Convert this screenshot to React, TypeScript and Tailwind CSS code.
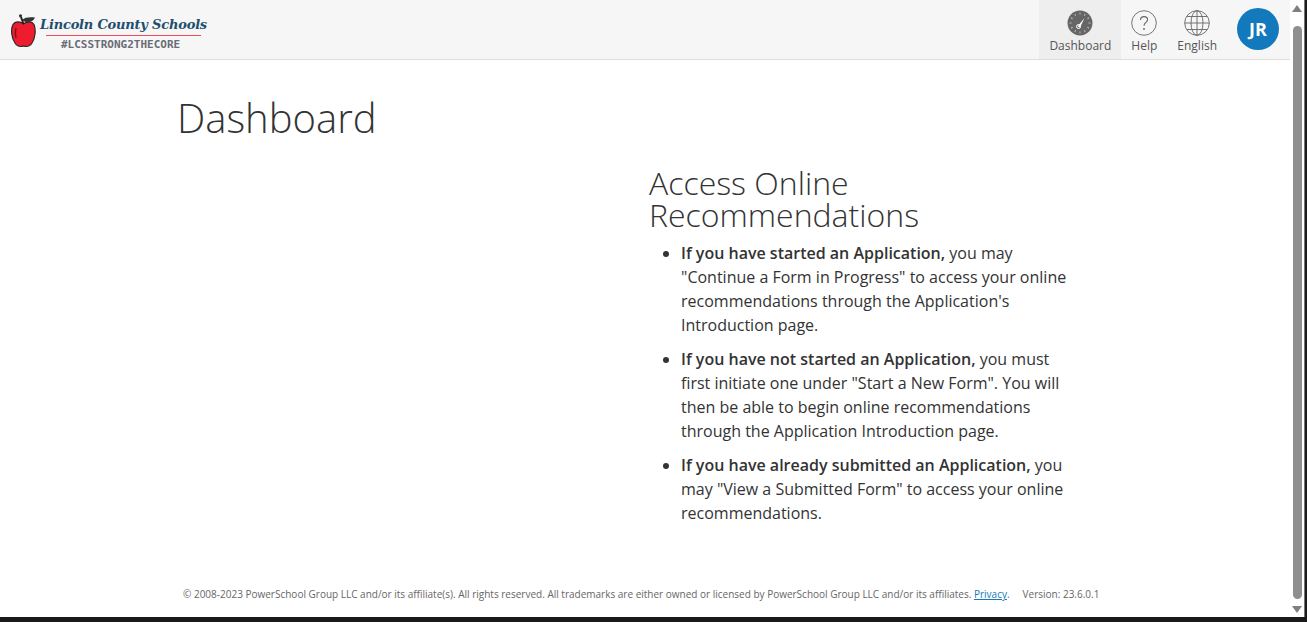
const openSans = "font-['Open_Sans',sans-serif]";

function Apple() {
  return (
    <svg width="25" height="34" viewBox="0 0 25 34" className="shrink-0 mt-[3px]">
      <path d="M12.5 10 C9 7 4 7 2 10.5 C-0.5 15 0.5 24 4 29 C6.5 33 9.5 33 12.5 32 C15.5 33 18.5 33 21 29 C24.5 24 25 15 23 10.5 C21 7 16 7 12.5 10 Z" fill="#ed1c2e" stroke="#2a2a2a" strokeWidth="1.2" />
      <path d="M12.5 10 L10 3" stroke="#222" strokeWidth="2" />
      <path d="M11 6 C14 3 19 3 24 3.5 C22 8 16 10 11 6 Z" fill="#333" />
      <circle cx="9.5" cy="1.8" r="1.6" fill="#333" />
      <path d="M5 14 C4 18 4 21 5 24" stroke="#7a1018" strokeWidth="1.4" fill="none" />
    </svg>
  );
}

function Gauge() {
  return (
    <svg width="26" height="26" viewBox="0 0 26 26">
      <circle cx="13" cy="13" r="12.5" fill="#666" />
      {[0, 30, 60, 90, 120, 150, 180, 210, 240, 270, 300, 330].map((a) => (
        <rect key={a} x="12.5" y="2.5" width="1" height="2" fill="#bbb" transform={`rotate(${a} 13 13)`} />
      ))}
      <path d="M10.5 16.5 L17.5 8 L13 17.5 Z" fill="#fff" />
      <circle cx="11.5" cy="16.5" r="2" fill="none" stroke="#fff" strokeWidth="1" />
    </svg>
  );
}

function HelpIcon() {
  return (
    <svg width="26" height="26" viewBox="0 0 26 26">
      <circle cx="13" cy="13" r="12.3" fill="none" stroke="#666" strokeWidth="0.9" />
      <path d="M9.5 10 C9.5 7.6 11 6.6 13 6.6 C15 6.6 16.6 7.8 16.6 9.8 C16.6 12.4 13 12.6 13 15.8" fill="none" stroke="#666" strokeWidth="1.1" />
      <circle cx="13" cy="19" r="0.9" fill="#666" />
    </svg>
  );
}

function Globe() {
  return (
    <svg width="26" height="26" viewBox="0 0 26 26" fill="none" stroke="#666" strokeWidth="0.9">
      <circle cx="13" cy="13" r="12.3" />
      <ellipse cx="13" cy="13" rx="6" ry="12.3" />
      <path d="M13 0.7 V25.3 M0.7 13 H25.3 M2.6 6.5 H23.4 M2.6 19.5 H23.4" />
    </svg>
  );
}

function NavItem({ icon, label, active }: { icon: React.ReactNode; label: string; active?: boolean }) {
  return (
    <div className={`flex flex-col items-center h-[59px] pt-[10px] px-[10px] ${active ? "bg-[#eeeeee]" : ""}`}>
      {icon}
      <span className="text-[12px] leading-[18px] mt-[1px] text-[#555]">{label}</span>
    </div>
  );
}

export default function App() {
  return (
    <div className={`${openSans} h-[622px] w-[1307px] overflow-hidden flex flex-col bg-[#1a1a1a]`}>
      <div className="flex h-[617px]">
        <div className="w-[1290px] bg-white flex flex-col">
          <header className="h-[60px] shrink-0 bg-[#f6f6f6] border-b border-[#dddddd] flex items-center justify-between">
            <div className="flex items-start pl-[11px] h-[59px] pt-[11px]">
              <Apple />
              <div className="flex flex-col items-start ml-[4px] mt-[5px]">
                <span className="font-['DejaVu_Serif',serif] italic font-bold text-[13px] leading-[18px] text-[#1f4e6e] whitespace-nowrap tracking-[-0.2px]">
                  Lincoln County Schools
                </span>
                <div className="w-[155px] h-px bg-[#ef4a55] mt-[1px] ml-[6px]" />
                <span className="font-['DejaVu_Sans_Mono',monospace] font-bold text-[11px] leading-[12px] mt-[3px] ml-[21px] text-[#6b6b76]">
                  #LCSSTRONG2THECORE
                </span>
              </div>
            </div>
            <div className="flex items-start h-[59px]">
              <NavItem icon={<Gauge />} label="Dashboard" active />
              <NavItem icon={<HelpIcon />} label="Help" />
              <NavItem icon={<Globe />} label="English" />
              <div className="w-[42px] h-[42px] rounded-full bg-[#1379bd] text-white font-bold text-[18px] flex items-center justify-center mt-[8px] ml-[10px] mr-[11px]">
                JR
              </div>
            </div>
          </header>

          <main className="flex-1 pl-[177px] flex flex-col">
            <h1 className="font-light text-[40px] leading-[48px] text-[#333] mt-[34px]">Dashboard</h1>
            <section className="ml-[472px] w-[425px] mt-[25px] text-[#333]">
              <h2 className="font-light text-[32px] leading-[32px]">
                Access Online
                <br />
                Recommendations
              </h2>
              <ul className="list-disc pl-[32px] mt-[10px] text-[16px] leading-[24px]">
                <li className="mb-[10px]">
                  <strong className="font-semibold">If you have started an Application,</strong> you may "Continue a Form in Progress" to access your online recommendations through the Application's Introduction page.
                </li>
                <li className="mb-[10px]">
                  <strong className="font-semibold">If you have not started an Application,</strong> you must first initiate one under "Start a New Form". You will then be able to begin online recommendations through the Application Introduction page.
                </li>
                <li>
                  <strong className="font-semibold">If you have already submitted an Application,</strong> you may "View a Submitted Form" to access your online recommendations.
                </li>
              </ul>
            </section>
            <footer className="mt-auto mb-[16px] ml-[6px] text-[10px] leading-[14px] text-[#666] whitespace-nowrap">
              © 2008-2023 PowerSchool Group LLC and/or its affiliate(s). All rights reserved. All trademarks are either owned or licensed by PowerSchool Group LLC and/or its affiliates.{" "}
              <a className="text-[#1379bd] underline">Privacy</a>.
              <span className="ml-[13px]">Version: 23.6.0.1</span>
            </footer>
          </main>
        </div>

        <div className="w-[14px] bg-white flex flex-col items-center">
          <div className="mt-[5px] w-0 h-0 border-x-[5px] border-x-transparent border-b-[7px] border-b-[#7f7f7f]" />
          <div className="w-[9px] flex-1 rounded-[5px] bg-[#8f8f8f] mt-[14px] mb-[7px]" />
          <div className="mb-[4px] w-0 h-0 border-x-[5px] border-x-transparent border-t-[7px] border-t-[#7f7f7f]" />
        </div>
        <div className="w-[3px] bg-[#1a1a1a] border-l border-[#777777]" />
      </div>
      <div className="h-[5px] bg-[#1a1a1a]" />
    </div>
  );
}
